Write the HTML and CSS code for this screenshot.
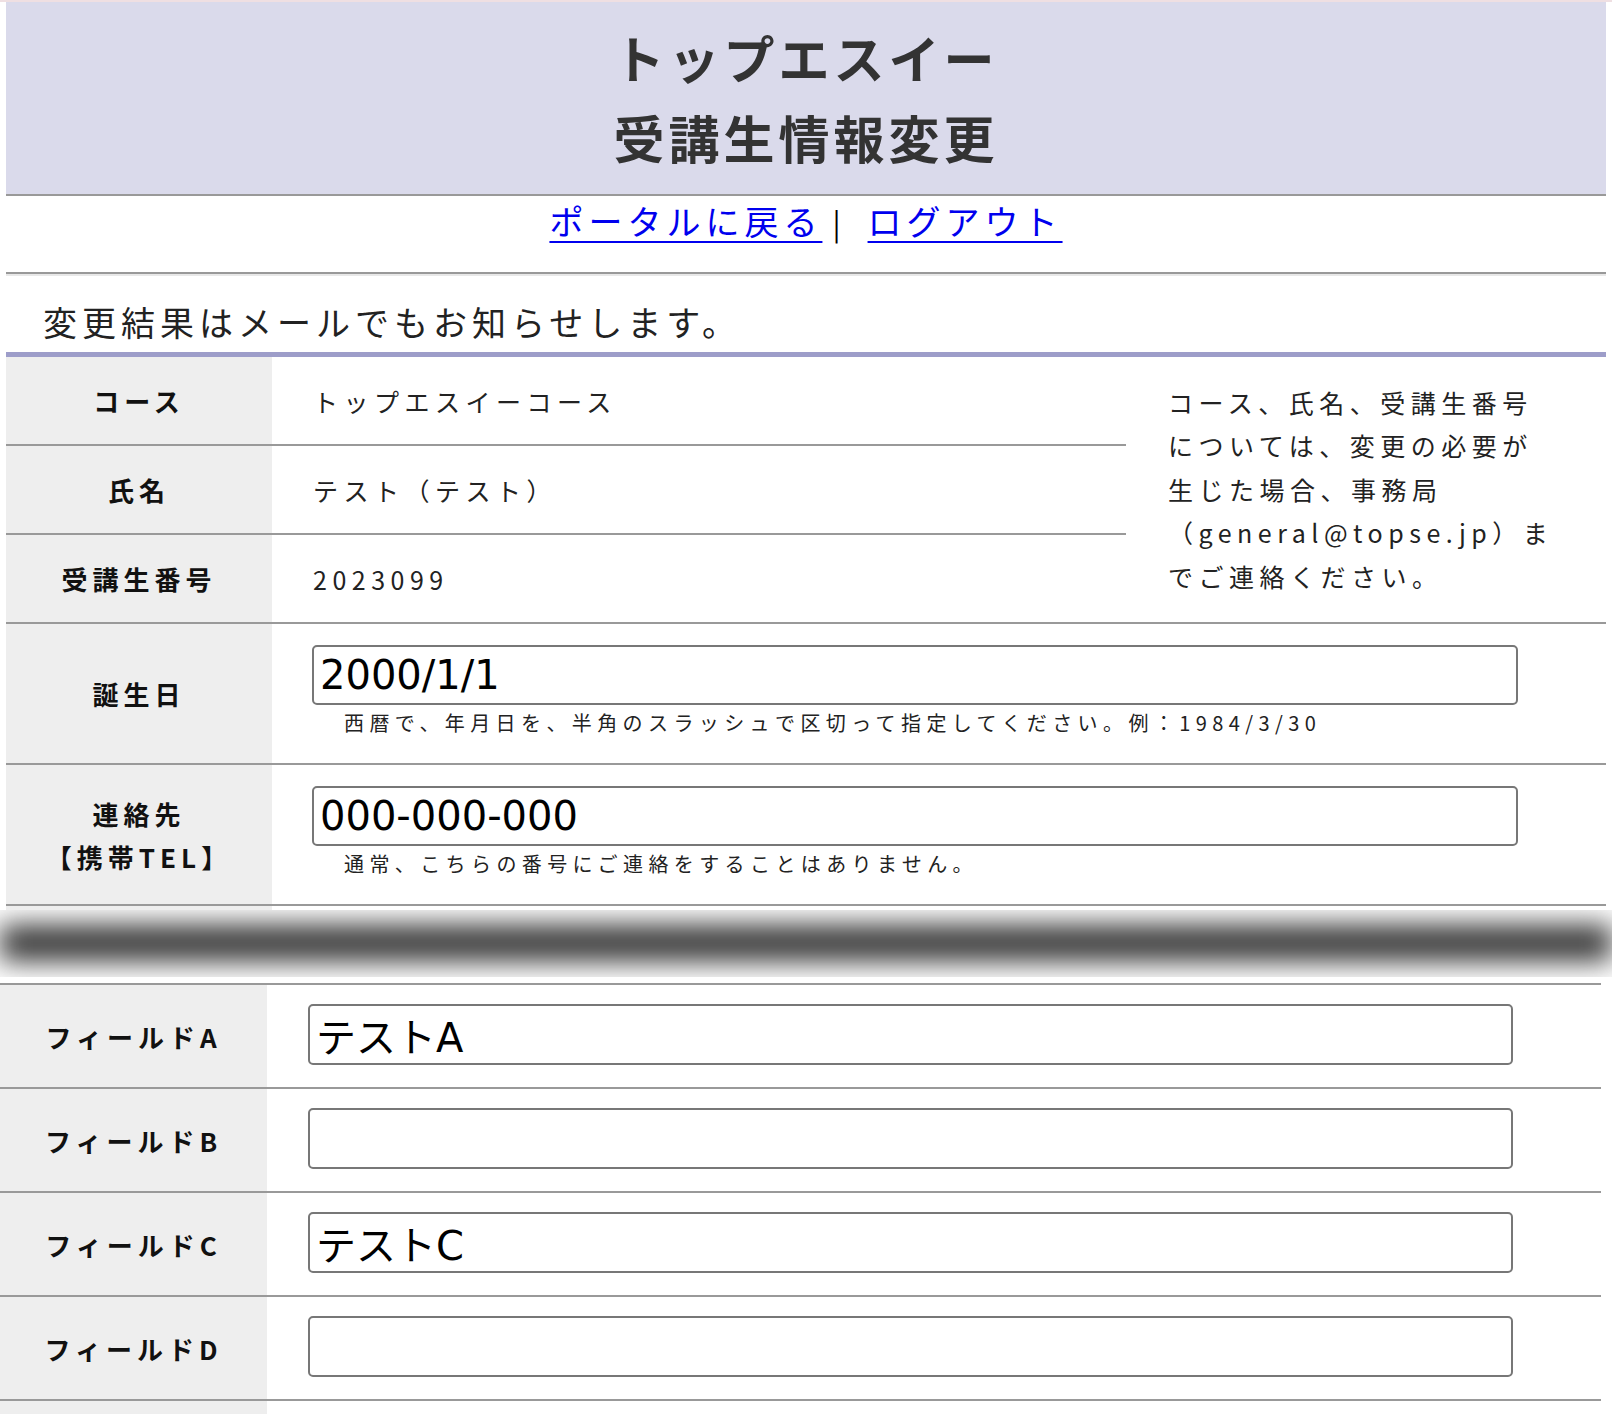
FILE: index.html
```html
<!DOCTYPE html>
<html lang="ja">
<head>
  <meta charset="UTF-8">
  <meta name="viewport" content="width=device-width, initial-scale=1">
  <title>トップエスイー 受講生情報変更</title>
  <link rel="stylesheet" href="styles.css">
</head>
<body>

  <div class="wrap">
    <div class="header">
      <h1>トップエスイー<br>受講生情報変更</h1>
    </div>

    <div class="nav">
      <a href="#">ポータルに戻る</a><span class="sep">|</span><a href="#">ログアウト</a>
    </div>
    <hr>

    <p class="notice">変更結果はメールでもお知らせします。</p>

    <!-- 変更できない項目 + 誕生日・連絡先 -->
    <div class="form-table">
      <div class="label">コース</div>
      <div class="value">トップエスイーコース</div>
      <div class="aside">コース、氏名、受講生番号については、変更の必要が生じた場合、事務局（general@topse.jp）までご連絡ください。</div>

      <div class="label">氏名</div>
      <div class="value">テスト（テスト）</div>

      <div class="label">受講生番号</div>
      <div class="value">2023099</div>

      <div class="label">誕生日</div>
      <div class="field">
        <input type="text" name="birthday" value="2000/1/1">
        <p class="hint">西暦で、年月日を、半角のスラッシュで区切って指定してください。例：1984/3/30</p>
      </div>

      <div class="label">連絡先<br>【携帯TEL】</div>
      <div class="field">
        <input type="text" name="tel" value="000-000-000">
        <p class="hint">通常、こちらの番号にご連絡をすることはありません。</p>
      </div>
    </div>
  </div>

  <div class="fold">
    <div class="fold-band"><div class="fold-shade"></div></div>
  </div>

  <!-- 任意フィールド -->
  <div class="form-table extra">
    <div class="label">フィールドA</div>
    <div class="field"><input type="text" name="field_a" value="テストA"></div>

    <div class="label">フィールドB</div>
    <div class="field"><input type="text" name="field_b" value=""></div>

    <div class="label">フィールドC</div>
    <div class="field"><input type="text" name="field_c" value="テストC"></div>

    <div class="label">フィールドD</div>
    <div class="field"><input type="text" name="field_d" value=""></div>

    <div class="label blank"></div>
    <div class="field blank"></div>
  </div>

</body>
</html>
```

FILE: styles.css
```css
body {
  margin: 0;
  border-top: 2px solid #efdfe2;
  font-family: "Noto Sans CJK JP", sans-serif;
  color: #222;
  letter-spacing: 5px;
}

.wrap {
  margin: 0 6px;
}

/* === ヘッダー === */
.header {
  background: #dadaeb;
  border-bottom: 2px solid #999;
}

.header h1 {
  margin: 0;
  padding: 15px 0 17px;
  font-size: 51px;
  line-height: 80px;
  font-weight: bold;
  letter-spacing: 4px;
  color: #333;
  text-align: center;
}

.nav {
  height: 76px;
  box-sizing: border-box;
  padding-top: 8px;
  text-align: center;
  font-size: 34px;
  line-height: 1;
}

.nav a {
  color: #0000ee;
  text-underline-offset: 6px;
  text-decoration-thickness: 2px;
}

.nav .sep {
  font-size: 30px;
  color: #000;
  margin: 0 22px 0 10px;
}

hr {
  margin: 0;
  height: 0;
  border: 0;
  border-top: 2px solid #999;
  border-bottom: 2px solid #e8e8e8;
}

.notice {
  margin: 0;
  height: 76px;
  box-sizing: border-box;
  padding: 29px 0 0 37px;
  font-size: 34px;
  line-height: 1;
}

/* === フォーム表 === */
.form-table {
  display: grid;
  grid-template-columns: 266px 854px 1fr;
  grid-template-rows: repeat(3, 89px);
  border-top: 5px solid #9d9dc9;
}

.form-table > div {
  box-sizing: border-box;
  border-bottom: 2px solid #999;
}

.label {
  display: flex;
  align-items: center;
  justify-content: center;
  text-align: center;
  background: #eee;
  font-size: 26px;
  font-weight: bold;
  line-height: 43px;
  color: #111;
}

.value {
  display: flex;
  align-items: center;
  padding-left: 41px;
  font-size: 25px;
  letter-spacing: 5.5px;
}

.aside {
  grid-column: 3;
  grid-row: 1 / span 3;
  display: flex;
  align-items: center;
  padding: 0 48px 0 42px;
  font-size: 25px;
  letter-spacing: 5.5px;
  line-height: 43.5px;
}

.field {
  grid-column: span 2;
  padding: 21px 88px 22px 40px;
}

.field input {
  display: block;
  width: 100%;
  height: 60px;
  box-sizing: border-box;
  margin: 0;
  padding: 0 6px;
  border: 2px solid #777;
  border-radius: 5px;
  font-family: "DejaVu Sans", "Noto Sans CJK JP", sans-serif;
  font-size: 40px;
  color: #000;
  background: #fff;
}

.hint {
  margin: 0;
  padding-left: 32px;
  font-size: 20px;
  letter-spacing: 5.4px;
  line-height: 36px;
}

/* 画面の継ぎ目 */
.fold {
  padding: 4px 0 6px;
  background: linear-gradient(90deg, #fff 6px, #eee 6px, #eee 272px, #fff 272px) top / 100% 4px no-repeat;
}

.fold-band {
  height: 67px;
  overflow: hidden;
  background: #fff;
}

.fold-shade {
  height: 36px;
  margin-top: 15px;
  background: #333;
  filter: blur(14px);
}

/* 任意フィールド */
.form-table.extra {
  margin-right: 11px;
  grid-template-columns: 267px 1fr;
  grid-template-rows: none;
  border-top: 2px solid #999;
}

.extra .field {
  grid-column: auto;
  padding: 19px 88px 22px 41px;
}

.extra .field input {
  height: 61px;
}

.extra .blank {
  height: 104px;
}
```
